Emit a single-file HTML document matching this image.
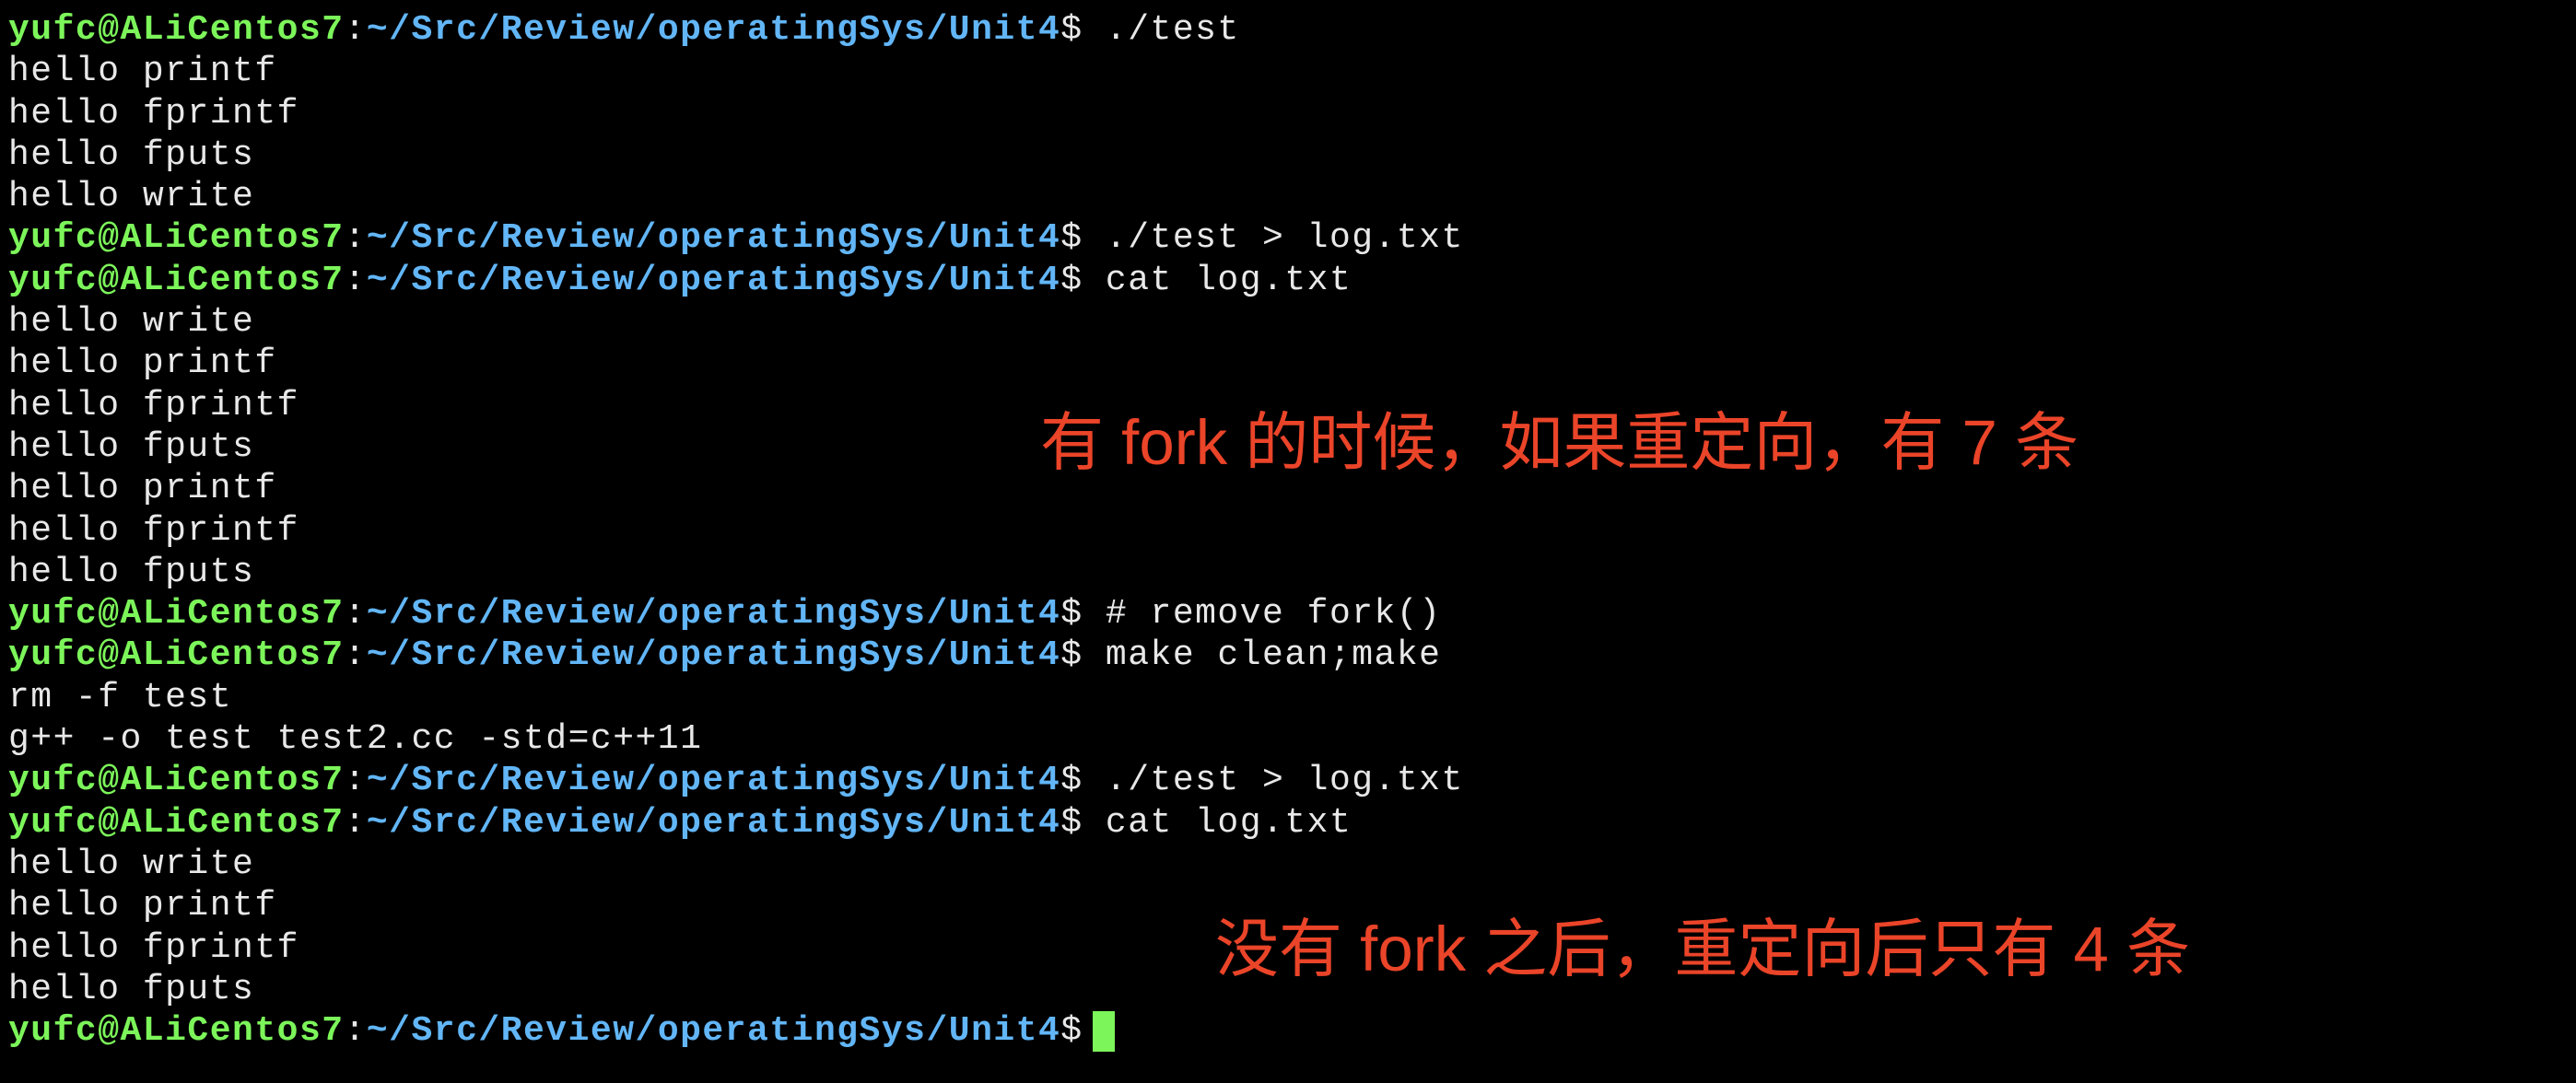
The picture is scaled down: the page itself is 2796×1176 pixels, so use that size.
<!DOCTYPE html>
<html><head><meta charset="utf-8"><style>
html,body{margin:0;padding:0;background:#000;}
body{width:2796px;height:1176px;overflow:hidden;position:relative;}
pre{position:absolute;left:9px;top:10px;margin:0;font-family:"Liberation Mono",monospace;font-size:38px;letter-spacing:1.5px;line-height:45.3px;color:#e8e8e8;}
.g{color:#7cf55a;font-weight:bold;}
.b{color:#62b6f7;font-weight:bold;}
.cur{position:absolute;left:1186px;top:1098px;width:24px;height:44px;background:#7cf55a;}
.note{position:absolute;color:#ea4429;font-family:"Liberation Sans","Noto Sans CJK SC",sans-serif;font-size:69px;line-height:80px;white-space:nowrap;}
</style></head><body>
<pre><span class="g">yufc@ALiCentos7</span>:<span class="b">~/Src/Review/operatingSys/Unit4</span>$ ./test
hello printf
hello fprintf
hello fputs
hello write
<span class="g">yufc@ALiCentos7</span>:<span class="b">~/Src/Review/operatingSys/Unit4</span>$ ./test &gt; log.txt
<span class="g">yufc@ALiCentos7</span>:<span class="b">~/Src/Review/operatingSys/Unit4</span>$ cat log.txt
hello write
hello printf
hello fprintf
hello fputs
hello printf
hello fprintf
hello fputs
<span class="g">yufc@ALiCentos7</span>:<span class="b">~/Src/Review/operatingSys/Unit4</span>$ # remove fork()
<span class="g">yufc@ALiCentos7</span>:<span class="b">~/Src/Review/operatingSys/Unit4</span>$ make clean;make
rm -f test
g++ -o test test2.cc -std=c++11
<span class="g">yufc@ALiCentos7</span>:<span class="b">~/Src/Review/operatingSys/Unit4</span>$ ./test &gt; log.txt
<span class="g">yufc@ALiCentos7</span>:<span class="b">~/Src/Review/operatingSys/Unit4</span>$ cat log.txt
hello write
hello printf
hello fprintf
hello fputs
<span class="g">yufc@ALiCentos7</span>:<span class="b">~/Src/Review/operatingSys/Unit4</span>$ </pre>
<div class="cur"></div>
<div class="note" style="left:1129px;top:441px;">有 fork 的时候，如果重定向，有 7 条</div>
<div class="note" style="left:1319px;top:991px;">没有 fork 之后，重定向后只有 4 条</div>
</body></html>
